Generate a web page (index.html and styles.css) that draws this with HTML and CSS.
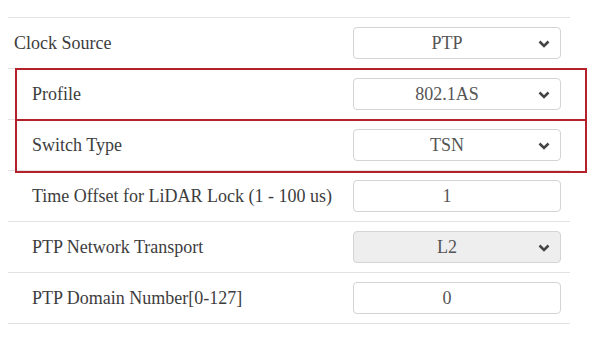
FILE: index.html
```html
<!DOCTYPE html>
<html lang="en">

<head>
    <meta charset="UTF-8">
    <meta name="viewport" content="width=device-width, initial-scale=1.0">
    <title>Time Sync Settings</title>
    <link rel="stylesheet" href="styles.css">
</head>

<body>
    <div class="panel">
        <div class="row">
            <label class="label">Clock Source</label>
            <div class="select">
                <span>PTP</span>
                <svg class="chevron" width="12" height="8" viewBox="0 0 12 8"><polyline points="1.5,1.5 6,6 10.5,1.5" /></svg>
            </div>
        </div>
        <div class="row sub">
            <label class="label">Profile</label>
            <div class="select">
                <span>802.1AS</span>
                <svg class="chevron" width="12" height="8" viewBox="0 0 12 8"><polyline points="1.5,1.5 6,6 10.5,1.5" /></svg>
            </div>
        </div>
        <div class="row sub">
            <label class="label">Switch Type</label>
            <div class="select">
                <span>TSN</span>
                <svg class="chevron" width="12" height="8" viewBox="0 0 12 8"><polyline points="1.5,1.5 6,6 10.5,1.5" /></svg>
            </div>
        </div>
        <div class="row sub">
            <label class="label" for="offset">Time Offset for LiDAR Lock (1 - 100 us)</label>
            <input class="field" type="text" id="offset" value="1">
        </div>
        <div class="row sub">
            <label class="label">PTP Network Transport</label>
            <div class="select disabled">
                <span>L2</span>
                <svg class="chevron" width="12" height="8" viewBox="0 0 12 8"><polyline points="1.5,1.5 6,6 10.5,1.5" /></svg>
            </div>
        </div>
        <div class="row sub">
            <label class="label" for="domain">PTP Domain Number[0-127]</label>
            <input class="field" type="text" id="domain" value="0">
        </div>

        <!-- annotation boxes -->
        <div class="mark mark-profile"></div>
        <div class="mark mark-switch"></div>
    </div>
</body>

</html>
```

FILE: styles.css
```css
body {
    margin: 0;
    background-color: #fff;
    font-family: "Liberation Serif", "Times New Roman", serif;
    font-size: 18px;
    color: #3d3d3d;
}

.panel {
    position: relative;
    width: 562px;
    margin: 17px 0 0 8px;
    border-top: 1px solid #e2e2e2;
}

.row {
    display: flex;
    align-items: center;
    height: 51px;
    box-sizing: border-box;
    padding: 0 9px 0 6px;
    border-bottom: 1px solid #e2e2e2;
}

.row.sub {
    padding-left: 24px;
}

.label {
    flex: 1;
}

.select,
.field {
    position: relative;
    display: flex;
    align-items: center;
    justify-content: center;
    width: 208px;
    height: 32px;
    box-sizing: border-box;
    padding: 0 20px 0 0;
    border: 1px solid #d4d4d4;
    border-radius: 4px;
    background-color: #fff;
    color: #555;
    font-family: inherit;
    font-size: 18px;
}

.field {
    text-align: center;
    outline: none;
}

.select.disabled {
    background-color: #eee;
}

.chevron {
    position: absolute;
    right: 10px;
    top: 12px;
    fill: none;
    stroke: #444;
    stroke-width: 2.6;
}

.mark {
    position: absolute;
    left: 7px;
    width: 572px;
    box-sizing: border-box;
    border: 2px solid #b3222a;
}

.mark-profile {
    top: 50px;
    height: 53px;
}

.mark-switch {
    top: 101px;
    height: 54px;
}
```
